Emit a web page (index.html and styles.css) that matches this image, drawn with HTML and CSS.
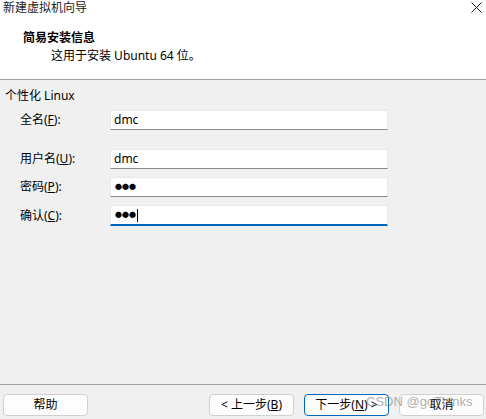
FILE: index.html
```html
<!DOCTYPE html>
<html lang="zh-CN">
<head>
<meta charset="utf-8">
<title>新建虚拟机向导</title>
<link rel="stylesheet" href="styles.css">
</head>
<body>
<div class="window">
  <div class="top">
    <div class="titlebar">
      <span class="title">新建虚拟机向导</span>
      <svg class="close" width="11" height="11" viewBox="0 0 11 11"><path d="M0.5 0.5 L10.5 10.5 M10.5 0.5 L0.5 10.5" stroke="#1a1a1a" stroke-width="1" fill="none"/></svg>
    </div>
    <div class="header">
      <div class="heading">简易安装信息</div>
      <div class="subtitle">这用于安装 Ubuntu 64 位。</div>
    </div>
  </div>
  <div class="content">
    <div class="group">个性化 Linux</div>
    <div class="row first">
      <span class="label">全名(<u>F</u>):</span>
      <div class="field">dmc</div>
    </div>
    <div class="row gap">
      <span class="label">用户名(<u>U</u>):</span>
      <div class="field">dmc</div>
    </div>
    <div class="row">
      <span class="label">密码(<u>P</u>):</span>
      <div class="field dots">●●●</div>
    </div>
    <div class="row">
      <span class="label">确认(<u>C</u>):</span>
      <div class="field dots focused">●●●<span class="caret"></span></div>
    </div>
  </div>
  <div class="footer">
    <button class="btn">帮助</button>
    <div class="spacer"></div>
    <button class="btn">&lt; 上一步(<u>B</u>)</button>
    <button class="btn primary">下一步(<u>N</u>) &gt;</button>
    <button class="btn">取消</button>
    <span class="watermark">CSDN @goThinks</span>
  </div>
</div>
</body>
</html>
```
FILE: styles.css
```css
* { box-sizing: border-box; }
html, body { margin: 0; padding: 0; }
body {
  width: 486px;
  height: 419px;
  overflow: hidden;
  font-family: "Noto Sans", "Noto Sans CJK SC", sans-serif;
  font-size: 12px;
  color: #000;
  background: #f0f0f0;
}
.window {
  display: flex;
  flex-direction: column;
  height: 419px;
}
.top { background: #fff; }
.titlebar {
  height: 20px;
  display: flex;
  justify-content: space-between;
  align-items: flex-start;
  padding: 0 4px 0 3px;
  line-height: 16px;
}
.title { color: #1a1a1a; }
.close { margin-top: 2px; }
.header {
  height: 60px;
  border-bottom: 1px solid #a0a0a0;
  padding: 10px 0 0 23px;
  line-height: 16px;
}
.heading { font-weight: bold; }
.subtitle { margin-top: 2px; padding-left: 28px; }
.content {
  flex: 1;
  padding: 8px 0 0 5px;
  line-height: 16px;
}
.group { height: 16px; }
.row {
  display: flex;
  align-items: center;
  margin-top: 8px;
}
.row.first { margin-top: 6px; }
.row.gap { margin-top: 19px; }
.label {
  width: 105px;
  padding-left: 15px;
}
.field {
  width: 278px;
  height: 20px;
  background: #fff;
  border: 1px solid #e8e8e8;
  border-bottom: 1px solid #8a8a8a;
  padding-left: 3px;
  line-height: 18px;
  display: flex;
  align-items: center;
}
.field.dots { font-size: 7px; padding-left: 4px; }
.field.focused {
  height: 21px;
  border-bottom: 2px solid #0067c0;
}
.caret {
  display: inline-block;
  width: 1px;
  height: 13px;
  background: #000;
  margin-left: 1px;
}
.footer {
  position: relative;
  height: 35px;
  border-top: 1px solid #a0a0a0;
  display: flex;
  align-items: flex-start;
  padding: 9px 2px 0 3px;
  gap: 10px;
}
.spacer { flex: 1; }
.btn {
  width: 85px;
  height: 22px;
  background: #fdfdfd;
  border: 1px solid #d0d0d0;
  border-radius: 4px;
  font-family: "Noto Sans", "Noto Sans CJK SC", sans-serif;
  font-size: 12px;
  color: #000;
  padding: 0;
  line-height: 18px;
}
.btn.primary { border-color: #0067c0; }
.watermark {
  position: absolute;
  left: 366px;
  top: 9px;
  font-family: "Liberation Sans", sans-serif;
  font-size: 13px;
  color: rgba(140, 140, 140, 0.7);
  pointer-events: none;
}
```
